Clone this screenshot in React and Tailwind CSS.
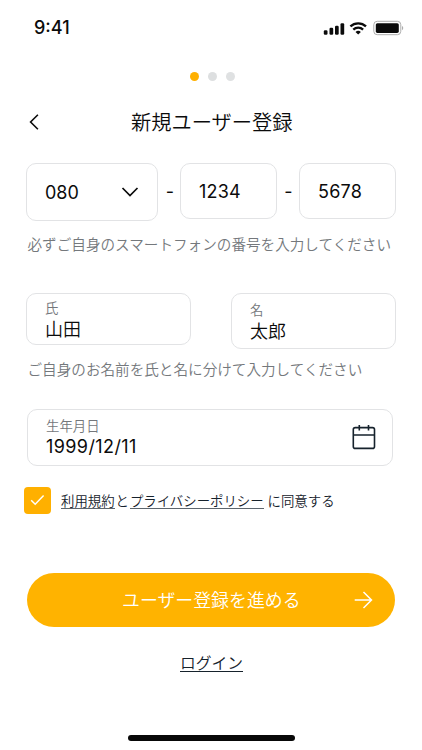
import React from "react";

function StatusBar() {
  return (
    <header className="flex h-[56px] items-center justify-between pl-[34px] pr-[18px]">
      <span className="text-[18px] leading-[22px] font-medium">9:41</span>
      <svg width="82" height="18" viewBox="0 0 82 18" fill="none">
        <g fill="#0b0b0b">
          <rect x="1.8" y="11.2" width="3.7" height="4.6" rx="1.2" />
          <rect x="7.5" y="8.8" width="3.7" height="7" rx="1.2" />
          <rect x="13" y="6.7" width="3.7" height="9.1" rx="1.2" />
          <rect x="18.5" y="4.2" width="3.7" height="11.6" rx="1.2" />
          <path d="M36.2 15.6l-2.7-2.6a3.9 3.9 0 0 1 5.4 0z" />
        </g>
        <g stroke="#0b0b0b" strokeWidth="2.3">
          <path d="M28.4 7.4a11.3 11.3 0 0 1 15.6 0" />
          <path d="M31.3 10.6a7.1 7.1 0 0 1 9.8 0" />
        </g>
        <rect x="51.8" y="2.3" width="27" height="13.4" rx="3.4" stroke="#adadad" />
        <rect x="53.8" y="4.2" width="23" height="9.7" rx="1.6" fill="#0b0b0b" />
        <path d="M80 7v4.2c1.7-.6 1.7-3.6 0-4.2z" fill="#adadad" />
      </svg>
    </header>
  );
}

function Field({ label, value, className }) {
  return (
    <div className={`rounded-[10px] border border-[#e2e3e5] pl-[18px] ${className}`}>
      <div className="text-[13.4px] leading-[18px] font-[350] text-[#74777b]">{label}</div>
      <div className="text-[18px] leading-[26px] font-[350]">{value}</div>
    </div>
  );
}

function Hint({ children }) {
  return (
    <p className="pl-[27.5px] text-[14.6px] leading-[20px] font-[350] whitespace-nowrap text-[#74787c]">
      {children}
    </p>
  );
}

export default function App() {
  return (
    <main className="flex h-[750px] w-[422px] flex-col overflow-hidden bg-white font-['Inter','Noto_Sans_CJK_JP',sans-serif] text-[#0b0b0b]">
      <StatusBar />

      <div className="mt-[16px] flex h-[10px] justify-center gap-[9px] pl-[3px]">
        <span className="size-[9px] rounded-full bg-[#ffb000]" />
        <span className="size-[9px] rounded-full bg-[#dddfe0]" />
        <span className="size-[9px] rounded-full bg-[#dfe1e2]" />
      </div>

      <div className="mt-[25px] flex h-[30px] items-center">
        <svg className="ml-[28px]" width="12" height="18" viewBox="0 0 12 18" fill="none">
          <path d="M9.9 1.8L2.6 9l7.3 7.2" stroke="#0b0b0b" strokeWidth="1.6" />
        </svg>
        <h1 className="ml-[91px] pt-[2px] text-[20.25px] leading-[30px] font-[350]">新規ユーザー登録</h1>
      </div>

      <div className="mt-[26px] flex h-[58px] items-start pl-[26px] text-[18px]">
        <div className="flex h-[58px] w-[132px] items-center justify-between rounded-[10px] border border-[#e2e3e5] pr-[18px] pl-[18px]">
          <span>080</span>
          <svg width="18" height="12" viewBox="0 0 18 12" fill="none">
            <path d="M1.5 2L9 9.5 16.5 2" stroke="#0b0b0b" strokeWidth="1.7" />
          </svg>
        </div>
        <span className="flex h-[56px] w-[22px] items-center justify-center pl-[2px]">-</span>
        <div className="flex h-[56px] w-[97px] items-center rounded-[10px] border border-[#e2e3e5] pl-[18px] tracking-[0.2px]">1234</div>
        <span className="flex h-[56px] w-[22px] items-center justify-center pl-[1px]">-</span>
        <div className="flex h-[56px] w-[97px] items-center rounded-[10px] border border-[#e2e3e5] pl-[18px] tracking-[0.2px]">5678</div>
      </div>

      <div className="mt-[14px]">
        <Hint>必ずご自身のスマートフォンの番号を入力してください</Hint>
      </div>

      <div className="mt-[38px] flex h-[56px] items-start gap-[40px] pl-[26px]">
        <Field label="氏" value="山田" className="h-[52px] w-[165px] pt-[5px]" />
        <Field label="名" value="太郎" className="h-[56px] w-[165px] pt-[7px]" />
      </div>

      <div className="mt-[11px]">
        <Hint>ご自身のお名前を氏と名に分けて入力してください</Hint>
      </div>

      <div className="mt-[29px] ml-[27px] flex h-[57px] w-[366px] items-center justify-between rounded-[10px] border border-[#e2e3e5] pr-[15px] pl-[18px]">
        <div>
          <div className="text-[13.4px] leading-[18px] font-[350] text-[#74777b]">生年月日</div>
          <div className="text-[18px] leading-[24px] tracking-[0.4px]">1999/12/11</div>
        </div>
        <svg className="mb-[2px]" width="26" height="28" viewBox="0 0 26 28" fill="none" stroke="#16222c" strokeWidth="1.6">
          <rect x="2.3" y="4.6" width="21.2" height="20.8" rx="2" />
          <path d="M2.3 12h21.2M8.3 2v5.6M17.5 2v5.6" />
        </svg>
      </div>

      <div className="mt-[20px] ml-[24px] flex h-[28px] items-center">
        <div className="flex size-[27px] items-center justify-center rounded-[4px] bg-[#ffb000]">
          <svg width="15" height="12" viewBox="0 0 15 12" fill="none">
            <path d="M1.2 6.2l4 4L13.6 1.6" stroke="#fff" strokeWidth="1.5" />
          </svg>
        </div>
        <p className="mb-[2px] ml-[10px] flex h-[19px] text-[13.4px] leading-[22px] font-[350] whitespace-nowrap text-[#16222c]">
          <a className="border-b border-[#5c656d]">利用規約</a>
          <span className="px-[1px]">と</span>
          <a className="border-b border-[#5c656d]">プライバシーポリシー</a>
          <span className="ml-[4px]">に同意する</span>
        </p>
      </div>

      <button className="mt-[59px] ml-[27px] flex h-[54px] w-[368px] items-center justify-between rounded-full bg-[#ffb300] pr-[22px] pl-[95px] text-[17.9px] font-[350] text-white">
        <span className="pt-[2px]">ユーザー登録を進める</span>
        <svg width="19" height="18" viewBox="0 0 19 18" fill="none">
          <path d="M.7 9h16.8M9.5 1l8 8-8 8" stroke="#fff" strokeWidth="1.5" />
        </svg>
      </button>

      <a className="mt-[25px] ml-[180px] h-[20px] w-[63px] border-b border-[#16222c] text-[15.75px] leading-[23px] font-[350] whitespace-nowrap text-[#16222c]">ログイン</a>

      <div className="mt-[63px] ml-[128px] h-[6px] w-[167px] rounded-full bg-[#080808]" />
    </main>
  );
}
